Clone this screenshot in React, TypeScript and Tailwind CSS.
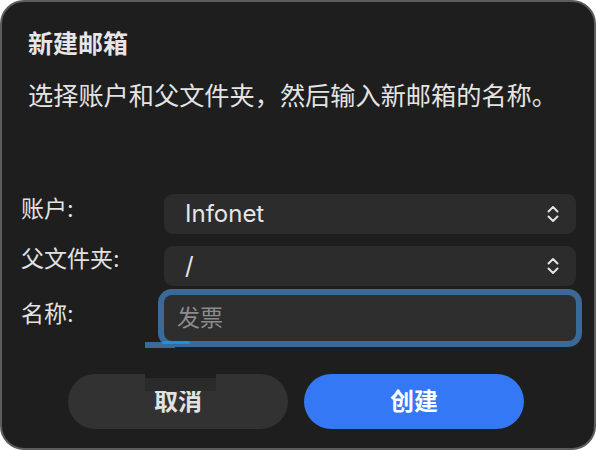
import React from "react";

const font = { fontFamily: 'Inter, "Noto Sans CJK SC", sans-serif' };

function Chevrons() {
  return (
    <svg width="12" height="18" viewBox="0 0 12 18" fill="none" stroke="#e2e2e2" strokeWidth="2" strokeLinecap="round" strokeLinejoin="round">
      <path d="M1.5 6.5 L6 2 L10.5 6.5" />
      <path d="M1.5 11.5 L6 16 L10.5 11.5" />
    </svg>
  );
}

export default function App() {
  return (
    <div className="w-[596px] h-[450px] bg-white" style={font}>
      <div className="relative w-[596px] h-[450px] rounded-[24px] border-2 border-[#5c5c5c] bg-[#1e1e1e] overflow-hidden flex flex-col">
        <div className="pl-[26px] pt-[30px] text-[25px] leading-[25px] font-bold text-[#e6e6e6]">新建邮箱</div>
        <div className="pl-[26px] mt-[27px] text-[25.2px] leading-[25px] text-[#e4e4e4]">选择账户和父文件夹，然后输入新邮箱的名称。</div>

        <div className="mt-[85px] flex flex-col">
          <div className="flex">
            <div className="w-[162px] shrink-0 pl-[19px] pt-[4px] text-[23px] leading-[23px] text-[#e2e2e2]">账户:</div>
            <div className="w-[412px] h-[40px] rounded-[9px] bg-[#2c2c2c] flex items-center justify-between pl-[21px] pr-[17px]">
              <span className="text-[24px] text-[#e6e6e6]">Infonet</span>
              <Chevrons />
            </div>
          </div>
          <div className="flex mt-[12px]">
            <div className="w-[162px] shrink-0 pl-[19px] pt-[2px] text-[23px] leading-[23px] text-[#e2e2e2]">父文件夹:</div>
            <div className="w-[412px] h-[40px] rounded-[9px] bg-[#2c2c2c] flex items-center justify-between pl-[21px] pr-[17px]">
              <span className="text-[24px] text-[#e6e6e6]">/</span>
              <Chevrons />
            </div>
          </div>
          <div className="flex mt-[9px]">
            <div className="w-[162px] shrink-0 pl-[19px] pt-[8px] text-[23px] leading-[23px] text-[#e2e2e2]">名称:</div>
            <div className="w-[412px] h-[46px] rounded-[8px] bg-[#2e2e2e] ring-[6px] ring-[#3b6a99] flex items-center pl-[13px]">
              <span className="text-[23px] text-[#8c8c8c]">发票</span>
            </div>
          </div>
        </div>

        <div className="mt-[33px] flex gap-[16px] pl-[66px]">
          <div className="w-[220px] h-[55px] rounded-full bg-[#323232] flex items-center justify-center text-[24px] font-semibold text-[#e2e2e2]">取消</div>
          <div className="w-[220px] h-[55px] rounded-full bg-[#3478f6] flex items-center justify-center text-[24px] font-semibold text-white">创建</div>
        </div>

        <div className="absolute left-[143px] top-[340px] w-[30px] h-[6px] bg-[#3b6a99]" />
        <div className="absolute left-[160px] top-[339px] w-[28px] h-[3px] rounded-full bg-[#1a8fe3]" />
        <div className="absolute left-[143px] top-[372px] w-[71px] h-[4px] bg-[#1e1e1e]" />
        <div className="absolute left-[143px] top-[376px] w-[71px] h-[13px] bg-[#2a2a2a]" />
      </div>
    </div>
  );
}
